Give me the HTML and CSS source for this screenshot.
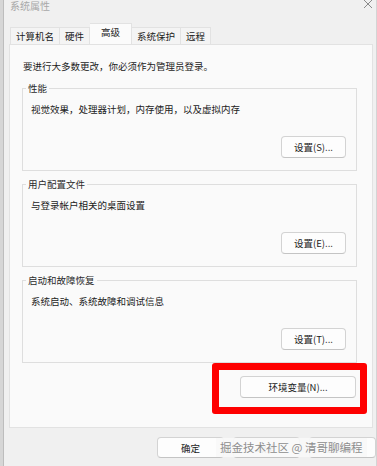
FILE: index.html
```html
<!DOCTYPE html>
<html lang="zh-CN">
<head>
    <meta charset="UTF-8">
    <title>系统属性</title>
    <link rel="stylesheet" href="styles.css">
</head>
<body>
    <div class="window">
        <div class="titlebar">
            <span class="title">系统属性</span>
            <svg class="close" width="10" height="10" viewBox="0 0 10 10">
                <path d="M1 1 L9 9 M9 1 L1 9" stroke="#8a8a8a" stroke-width="1" fill="none"/>
            </svg>
        </div>

        <div class="tabs">
            <div class="tab">计算机名</div>
            <div class="tab">硬件</div>
            <div class="tab active">高级</div>
            <div class="tab">系统保护</div>
            <div class="tab">远程</div>
        </div>

        <div class="panel">
            <p class="note">要进行大多数更改，你必须作为管理员登录。</p>

            <fieldset class="group">
                <legend>性能</legend>
                <p class="desc">视觉效果，处理器计划，内存使用，以及虚拟内存</p>
                <div class="actions"><button class="btn">设置(S)...</button></div>
            </fieldset>

            <fieldset class="group">
                <legend>用户配置文件</legend>
                <p class="desc">与登录帐户相关的桌面设置</p>
                <div class="actions"><button class="btn">设置(E)...</button></div>
            </fieldset>

            <fieldset class="group">
                <legend>启动和故障恢复</legend>
                <p class="desc">系统启动、系统故障和调试信息</p>
                <div class="actions"><button class="btn">设置(T)...</button></div>
            </fieldset>

            <div class="env-row">
                <div class="highlight">
                    <button class="btn btn-wide">环境变量(N)...</button>
                </div>
            </div>
        </div>

        <div class="footer">
            <button class="btn btn-foot">确定</button>
            <button class="btn btn-foot">取消</button>
            <button class="btn btn-foot">应用(A)</button>
            <span class="watermark">掘金技术社区 @ 清哥聊编程</span>
        </div>
    </div>
</body>
</html>
```

FILE: styles.css
```css
body {
    margin: 0;
    width: 377px;
    height: 466px;
    overflow: hidden;
    background-color: #d6d6d6;
    font-family: "Noto Sans CJK SC", "Noto Sans", sans-serif;
    font-size: 9.5px;
    color: #1b1b1b;
}

.window {
    margin-left: 3px;
    height: 466px;
    background-color: #f0f0f0;
    border-left: 1px solid #bdbdbd;
    border-right: 1px solid #d4d4d4;
    box-sizing: border-box;
}

.titlebar {
    height: 23px;
    display: flex;
    justify-content: space-between;
    align-items: flex-start;
    padding: 0 3px 0 6px;
}

.title {
    margin-top: -1px;
    line-height: 13px;
    font-size: 10px;
    color: #a8a8a8;
}

.close {
    margin-top: -1px;
}

/* tabs */
.tabs {
    display: flex;
    align-items: flex-end;
    padding-left: 6px;
    height: 21px;
}

.tab {
    height: 17px;
    line-height: 16px;
    min-width: 26px;
    padding: 0 5px;
    text-align: center;
    background-color: #f4f4f4;
    border: 1px solid #e2e2e2;
    border-bottom: none;
    box-sizing: border-box;
}

.tab + .tab {
    border-left: none;
}

.tab.active {
    height: 21px;
    line-height: 17px;
    padding: 0 11px;
    background-color: #fbfbfb;
    border-color: #e2e2e2;
    position: relative;
    z-index: 1;
}

/* main panel */
.panel {
    margin: 0 3px 0 5px;
    padding: 16px 15px 13px 12px;
    height: 384px;
    box-sizing: border-box;
    background-color: #fafafa;
    border: 1px solid #e2e2e2;
}

.note {
    margin: -1px 0 9px 1px;
    line-height: 13px;
}

.group {
    margin: 0 0 7px 0;
    padding: 0 10px 11px 8px;
    border: 1px solid #dedede;
    height: 89px;
    box-sizing: border-box;
}

.group legend {
    margin-left: -5px;
    padding: 0 2px;
    line-height: 13px;
    color: #2a2a2a;
}

.desc {
    margin: 8px 0 0 0;
    line-height: 13px;
}

.actions {
    display: flex;
    justify-content: flex-end;
    margin-top: 20px;
}

.btn {
    font-family: inherit;
    font-size: 9.5px;
    color: #1b1b1b;
    width: 65px;
    height: 22px;
    padding: 0;
    background-color: #fdfdfd;
    border: 1px solid #d3d3d3;
    border-bottom-color: #c4c4c4;
    border-radius: 4px;
}

.env-row {
    display: flex;
    justify-content: flex-end;
    margin: -7px -10px 0 0;
}

.highlight {
    border: 7px solid #fe0000;
    border-radius: 3px;
    padding: 6px 4px 9px 21px;
}

.btn-wide {
    width: 116px;
}

/* footer */
.footer {
    position: relative;
    display: flex;
    justify-content: flex-end;
    gap: 9px;
    padding: 9px 0 0 0;
}

.btn-foot {
    width: 67px;
    height: 21px;
}

.watermark {
    position: absolute;
    left: 212px;
    top: 10px;
    padding: 0 4px;
    white-space: nowrap;
    font-size: 11.5px;
    line-height: 19px;
    color: #8d8d8d;
    background-color: rgba(248, 248, 248, 0.9);
    text-shadow: 0 0 2px #ffffff;
}
```
